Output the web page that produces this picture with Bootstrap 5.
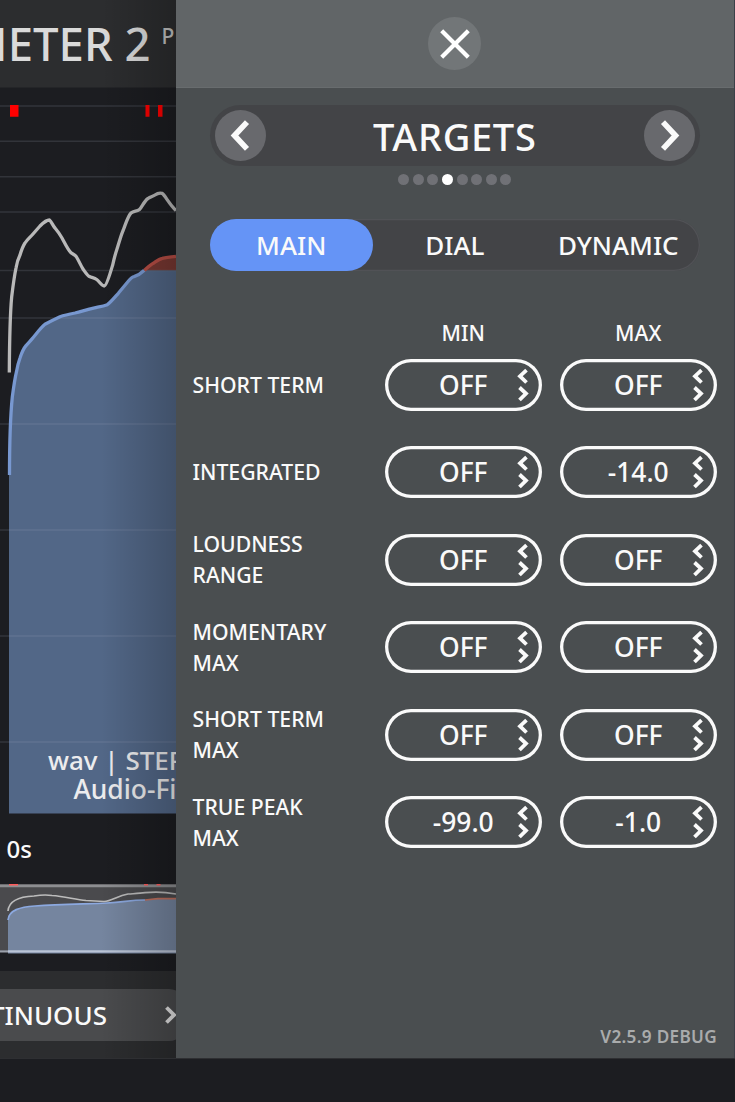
<!DOCTYPE html>
<html lang="en">
<head>
<meta charset="utf-8">
<meta name="viewport" content="width=device-width, initial-scale=1">
<title>Loudness meter – Targets</title>
<link rel="stylesheet" href="https://cdn.jsdelivr.net/npm/bootstrap@5.3.0/dist/css/bootstrap.min.css">
<style>
body{background:#1c1d21;color:#fafafa;font-family:"Noto Sans","Open Sans",sans-serif;font-weight:500;height:1102px;overflow:hidden;line-height:1}
.shell{height:1059px;border-bottom:1px solid #2e2f32;white-space:nowrap}
.meter{width:175.5px;background:#1c1d21}
.meter::after{content:"";position:absolute;top:0;bottom:0;right:0;width:75px;background:linear-gradient(90deg,rgba(0,0,0,0),rgba(0,0,0,.22))}
.meter-head{height:88px;background:#2c2d2f;border-bottom:1px solid #242528;color:#dadada}
.meter-title{font-size:45.5px;width:158.5px;margin-right:3px}
.meter-sup{font-size:21px;color:#c4c4c4;margin-top:-14px}
.overview{height:70px}
.meter-foot{height:88px;margin-top:17px;background:#2c2d2f;padding-top:18px}
.mode-pill{width:185px;height:52px;border-radius:0 16px 16px 0;background:#4a4b4d;font-size:26px}
.side{background:#4a4e50;border-right:1px solid #3b4048}
.side-head{height:88px;background:#616567;border-bottom:1px solid #686c6e}
.round{width:51px;height:51px;border-radius:50%;background:#68696d;border:0;padding:0}
.side-head .round{width:53px;height:53px;background:#727678}
.pager{height:61px;margin:17px 34px 0;padding:0 5px;background:#434447;border-radius:31px;font-size:38px;letter-spacing:.7px}
.dots{gap:3.65px;margin-top:8px;height:11px}
.dots span{width:11px;height:11px;border-radius:50%;background:#707176}
.dots .on{background:#fff}
.tabs{height:52px;margin:34px 34px 0;background:#434447;border-radius:26px;box-shadow:inset 0 0 0 1.3px #515256;font-size:26px}
.tabs>div{flex:1 1 0;border-radius:26px}
.tabs .on{background:#6594f6}
.targets{padding:0 17px 0 17px;font-size:21.2px;line-height:31px}
.heads{height:31px;margin-top:45.5px;margin-bottom:-6.5px}
.targets .col-val{width:157.5px;flex:none;margin-left:17.5px;text-align:center}
.target-row{height:87.5px}
.target-name{margin-top:-1px}
.val{height:52px;box-shadow:inset 0 0 0 3.3px #fafafa;border-radius:26px;font-size:26.4px;line-height:1}
.val svg{position:absolute;right:12.5px;top:9px}
.version{font-size:17.2px;letter-spacing:.3px;font-weight:600;color:#a9abac;padding:0 17px 12.5px}
</style>
</head>
<body>
<div class="shell d-flex">
  <section class="meter position-relative overflow-hidden flex-shrink-0 d-flex flex-column">
    <header class="meter-head d-flex align-items-center justify-content-start flex-shrink-0">
      <div class="meter-title d-flex justify-content-end flex-shrink-0"><span class="pe-2">METER 2</span></div><div class="meter-sup">P</div>
    </header>
    <svg class="flex-shrink-0" width="176" height="796" viewBox="0 88 176 796">
      <path fill="#526787" d="M9 813.500V475C9.500 440 10.500 415 12.300 397C13.500 388 15 378 16.500 371.700C17.500 366 18.500 362 20 358C22 352 24 348 26 345.700C28 343 30.500 341 33 337.700C37 333 41 327.500 45 324.300C50 321.500 55 319 60 316.700C65 315 70 314 75 313C82 311 90 309 96.700 307.300C101 306.500 104 306 107.300 304.700C111 302 115 297 118.300 293.300L128.500 281C131 278 132 277 134 276.700C138 275.500 141 273.500 144.300 270.300H176V813.500Z"/>
      <path fill="#793832" d="M144.300 270.300C147 268 150 265 153.300 263.300C156 261.500 159 259 162.300 258.300C167 257 171 257 176 256.300V270.300Z"/>
      <g stroke="#aab0c0" stroke-opacity=".16" stroke-width="1.500"><path d="M0 106H176M0 141.300H176M0 176.700H176M0 212H176M0 270.500H176M0 318H176M0 424H176M0 530H176M0 636H176M0 742H176"/></g>
      <g fill="none" stroke-width="3.300" stroke-linejoin="round">
        <path stroke="#7898d0" d="M9.500 475C9.500 440 10.500 415 12.300 397C13.500 388 15 378 16.500 371.700C17.500 366 18.500 362 20 358C22 352 24 348 26 345.700C28 343 30.500 341 33 337.700C37 333 41 327.500 45 324.300C50 321.500 55 319 60 316.700C65 315 70 314 75 313C82 311 90 309 96.700 307.300C101 306.500 104 306 107.300 304.700C111 302 115 297 118.300 293.300L128.500 281C131 278 132 277 134 276.700C138 275.500 141 273.500 144.300 270.300"/>
        <path stroke="#b84e45" d="M144.300 270.300C147 268 150 265 153.300 263.300C156 261.500 159 259 162.300 258.300C167 257 171 257 176 256.300"/>
        <path stroke="#b9b9b9" d="M9.300 372.500C9.500 340 10 315 11.700 296.700C13 286 14.500 275 16 268C17 262 18.500 258 20 255C21.500 250 23 246 25 243C27.500 239 30 237.500 33 234L40 226C43 223 46 220 49.500 220C51.500 221.500 53 226 55 228C57.500 231 60 234.500 62 238C65 243.500 68 250 71 252.700C73 254.500 75 254.500 76.500 257C79 261 81 266 83 269C85.500 272.500 87 275 89 276.300C92 278 94 277.500 96.700 279.500C99.500 281.500 101.500 286 104.300 286C107 285.500 111 270 112.700 265C114 259 115 255 116.700 250C119 243 121 235 123.300 230C126 223 128 216 131 213C133.500 210.800 136.500 211.500 139.300 209.700C142 207.500 144 201 148 198.500C150.500 196.500 153 196.500 155 195C157 193.500 160 192.800 162 193.300C165 195 169 204 176 210.500"/>
      </g>
      <path fill="#f00" d="M10 105H18.500V116.700H10ZM145.500 105H149.500V116.700H145.500ZM158 105H162.500V116.700H158Z"/>
      <g fill="#ececee" font-size="26"><text x="48" y="769.500">wav | STER</text><text x="73.500" y="799" font-size="26.400">Audio-Fi</text></g>
      <text x="6.500" y="858" fill="#fafafa" font-size="24">0s</text>
    </svg>
    <svg class="overview flex-shrink-0" width="176" height="70" viewBox="0 884 176 70">
      <path fill="#4a4a4d" d="M0 884H176V950H0Z"/>
      <path fill="#75859f" d="M8 953.500V918C9 910 20 907 35 906C60 904 85 904 107 903C125 902 130 900 145 900L158 898.500H176V953.500Z"/>
      <g fill="none" stroke-width="1.700"><path stroke="#8ca9e0" d="M8 920C9 910 20 907 35 906C60 904 85 904 107 903C125 902 130 900 145 900"/><path stroke="#c0705e" d="M145 900L158 898.700H176"/><path stroke="#bcbcbc" d="M8 911C9 900 20 896.500 34 896C40 895 46 894.500 52 895.500C65 896.500 75 899.500 86 900.500L104 901.500C112 901 117 896 128 894C137 893.500 140 893.500 145 892.700C155 891.500 163 891.500 176 894"/></g>
      <path stroke="#8d8e91" stroke-width="2.700" d="M0 885.800H176"/><path stroke="#dfe6f5" stroke-opacity=".65" stroke-width="2.300" d="M0 951.300H176"/>
      <path stroke="#ff5a5a" stroke-width="1.500" d="M9 884.800H18M144 884.800H148M156.500 884.800H160.500"/>
    </svg>
    <footer class="meter-foot flex-shrink-0">
      <div class="mode-pill d-flex align-items-center position-relative">
        <div class="d-flex justify-content-end" style="width:107px"><span>TINUOUS</span></div>
        <svg class="ms-auto me-1" width="16" height="20" fill="none" stroke="#e4e4e4" stroke-width="3.800"><path d="M1.500 2.500L9 10L1.500 17.500"/></svg>
      </div>
    </footer>
  </section>
  <aside class="side flex-grow-1 d-flex flex-column">
    <header class="side-head d-flex align-items-center justify-content-center">
      <button class="round d-flex align-items-center justify-content-center" aria-label="Close"><svg width="32" height="32" fill="none" stroke="#fff" stroke-width="4.200"><path d="M2.700 2.700L29.300 29.300M29.300 2.700L2.700 29.300"/></svg></button>
    </header>
    <div class="pager d-flex align-items-center justify-content-between">
      <button class="round" aria-label="Previous"><svg class="d-block" width="51" height="51" fill="none" stroke="#fafafa" stroke-width="5.600"><path d="M32 12.200L19.500 25.500L32 38.800"/></svg></button>
      <span>TARGETS</span>
      <button class="round" aria-label="Next"><svg class="d-block" width="51" height="51" fill="none" stroke="#fafafa" stroke-width="5.600"><path d="M19 12.200L31.500 25.500L19 38.800"/></svg></button>
    </div>
    <div class="dots d-flex justify-content-center"><span></span><span></span><span></span><span class="on"></span><span></span><span></span><span></span><span></span></div>
    <nav class="tabs d-flex text-center">
      <div class="on d-flex align-items-center justify-content-center">MAIN</div>
      <div class="d-flex align-items-center justify-content-center">DIAL</div>
      <div class="d-flex align-items-center justify-content-center">DYNAMIC</div>
    </nav>
    <div class="targets" id="targets">
      <div class="heads d-flex"><div class="flex-grow-1"></div><div class="col-val">MIN</div><div class="col-val">MAX</div></div>
    </div>
    <div class="version mt-auto text-end">V2.5.9 DEBUG</div>
  </aside>
</div>
<script src="https://cdn.jsdelivr.net/npm/bootstrap@5.3.0/dist/js/bootstrap.bundle.min.js"></script>
<script>
const rows=[['SHORT TERM','OFF','OFF'],['INTEGRATED','OFF','-14.0'],['LOUDNESS<br>RANGE','OFF','OFF'],['MOMENTARY<br>MAX','OFF','OFF'],['SHORT TERM<br>MAX','OFF','OFF'],['TRUE PEAK<br>MAX','-99.0','-1.0']];
const field=v=>`<div class="col-val val position-relative d-flex align-items-center justify-content-center">${v}<svg width="14" height="34" fill="none" stroke="#fafafa" stroke-width="3.800"><path d="M10.500 2.200L4 8.200L10.500 14.500M3.500 19.500L10 25.500L3.500 32"/></svg></div>`;
document.getElementById('targets').insertAdjacentHTML('beforeend',rows.map(r=>`<div class="target-row d-flex align-items-center"><div class="target-name flex-grow-1">${r[0]}</div>${field(r[1])}${field(r[2])}</div>`).join(''));
</script>
</body>
</html>
